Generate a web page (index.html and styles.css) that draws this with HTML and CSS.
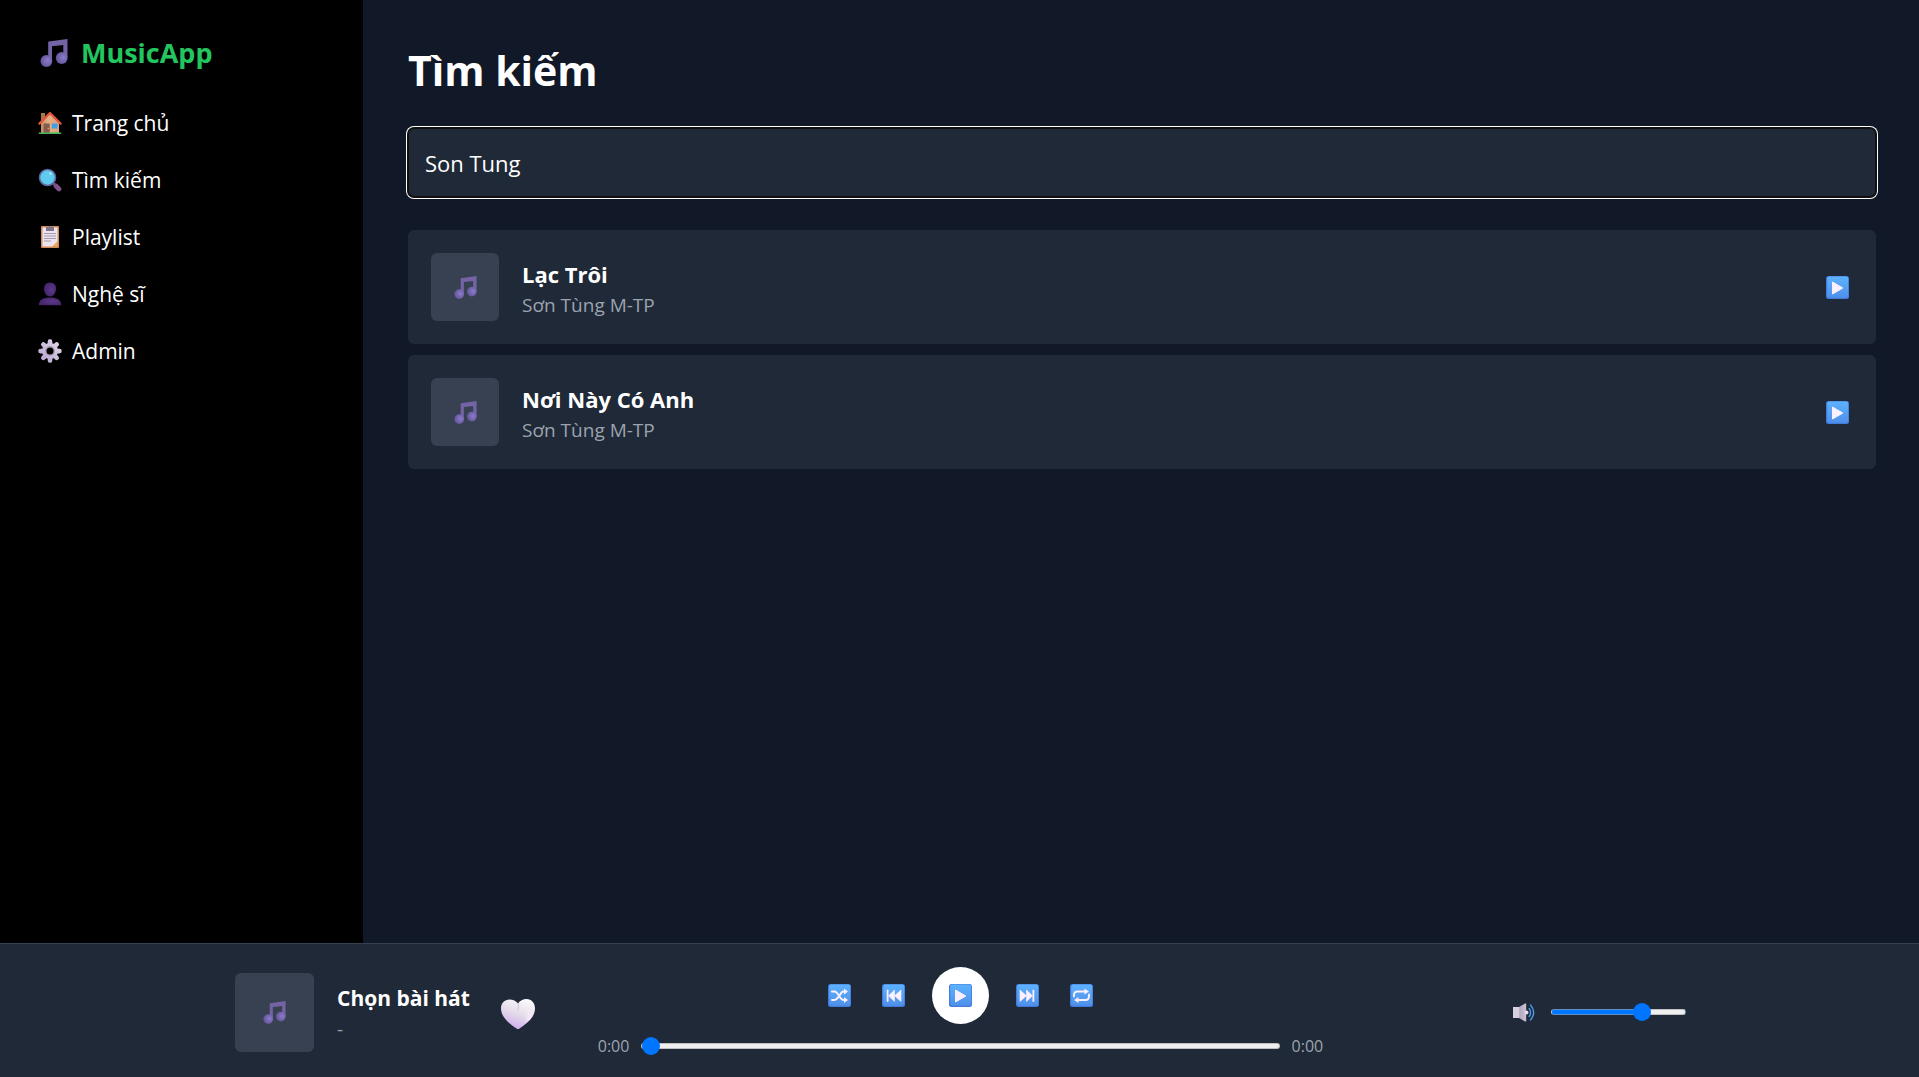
FILE: index.html
```html
<!DOCTYPE html>
<html lang="vi">
<head>
<meta charset="utf-8">
<meta name="viewport" content="width=device-width, initial-scale=1">
<title>MusicApp - Tìm kiếm</title>
<link rel="stylesheet" href="styles.css">
</head>
<body>
<svg class="sprite" aria-hidden="true">
  <defs>
    <radialGradient id="g-note" cx=".62" cy=".45" r=".6"><stop offset="0" stop-color="#8b7ccb"/><stop offset="1" stop-color="#65559a"/></radialGradient>
    <linearGradient id="g-key" x1="0" y1="0" x2="0" y2="1"><stop offset="0" stop-color="#5db2fd"/><stop offset="1" stop-color="#4f90ea"/></linearGradient>
    <linearGradient id="g-wall" x1="0" y1="0" x2="1" y2="0"><stop offset="0" stop-color="#c08b5c"/><stop offset=".4" stop-color="#e8ae82"/><stop offset="1" stop-color="#dba27d"/></linearGradient>
    <linearGradient id="g-gear" x1="1" y1="0" x2="0" y2="1"><stop offset="0" stop-color="#ded6e6"/><stop offset="1" stop-color="#b8a6d2"/></linearGradient>
    <linearGradient id="g-heart" x1=".7" y1="0" x2=".3" y2="1"><stop offset="0" stop-color="#fafafa"/><stop offset=".5" stop-color="#e4dbe9"/><stop offset="1" stop-color="#cfa9f0"/></linearGradient>
    <radialGradient id="g-heart-glow" cx=".68" cy=".62" r=".35"><stop offset="0" stop-color="#f6e9fc"/><stop offset="1" stop-color="#f6e9fc" stop-opacity="0"/></radialGradient>
    <linearGradient id="g-horn" x1="0" y1="0" x2="1" y2="0"><stop offset="0" stop-color="#d8cfdf"/><stop offset=".45" stop-color="#d8cfdf"/><stop offset=".5" stop-color="#b4aabf"/><stop offset="1" stop-color="#cbc1d6"/></linearGradient>
    <radialGradient id="g-person" cx=".6" cy=".5" r=".6"><stop offset="0" stop-color="#5b3a8c"/><stop offset="1" stop-color="#432368"/></radialGradient>
  </defs>
  <symbol id="i-note" viewBox="0 0 28 28">
    <path fill="#7464a6" d="M8.600 2.600 27.500 0v18.500h-4.200V6L12 7.200V22H8.200V3z"/>
    <circle cx="6.400" cy="22" r="5.900" fill="url(#g-note)"/>
    <circle cx="21.700" cy="19" r="5.900" fill="url(#g-note)"/>
  </symbol>
  <symbol id="i-home" viewBox="0 0 24 24">
    <path fill="#a8763f" d="M3 2h4v9H3z"/>
    <path fill="url(#g-wall)" d="M3 11.500 12 3l9 8.500V22H3z"/>
    <path fill="none" stroke="#e2553f" stroke-width="2.200" stroke-linecap="round" stroke-linejoin="round" d="M1.400 12.600 12 2l10.600 10.600"/>
    <path fill="#855a50" d="M5.500 12.500h6.200V22H5.500z"/><circle cx="10.300" cy="17.500" r=".8" fill="#d9a07c"/>
    <path fill="#3f9fe8" d="M13.800 12.500h5.700v5h-5.700z"/>
    <path fill="#41b957" d="M.8 21.500h22.400v1.500H.8z"/>
  </symbol>
  <symbol id="i-search" viewBox="0 0 24 24">
    <path stroke="#82528e" stroke-width="4.600" stroke-linecap="round" d="m18 18 3 3"/>
    <path stroke="#6d5181" stroke-width="3" d="m14.500 14.500 3 3"/>
    <circle cx="9.500" cy="9.500" r="8" fill="#5fcbf0" stroke="#61679c" stroke-width="1.600"/>
    <circle cx="12.500" cy="5.500" r="1.200" fill="#b7ebfb"/>
  </symbol>
  <symbol id="i-list" viewBox="0 0 24 24">
    <rect x="3" y="1" width="18" height="22" rx="1" fill="#d38a55"/>
    <path fill="#ece4f0" d="M4.500 2.500h15v14l-5 5h-10z"/>
    <path fill="#f3a860" d="m14.500 21.500 5-5v5z"/>
    <path fill="#81758a" d="M8 2h2.500a1.600 1.600 0 0 1 3 0H16v4H8z"/>
    <path stroke="#a49aac" stroke-width="1" d="M6 8.500h12M6 11h12M6 13.500h12M6 16h7"/>
  </symbol>
  <symbol id="i-user" viewBox="0 0 24 24">
    <path fill="url(#g-person)" d="M12 .8c4 0 6 2 6 5.500 0 5-2.500 8.200-6 8.200S6 11.300 6 6.300C6 2.800 8 .8 12 .8z"/>
    <path fill="url(#g-person)" d="M.8 23.300C1 17.500 5 15.500 12 15.500s11 2 11.200 7.800z"/>
  </symbol>
  <symbol id="i-gear" viewBox="0 0 24 24">
    <g stroke="url(#g-gear)" stroke-width="4.600" stroke-linecap="round"><path d="M12 2.600v18.900M2.600 12.100h18.800M5.300 5.400l13.400 13.400M18.700 5.400 5.300 18.800"/></g>
    <path fill="url(#g-gear)" d="M10 .8h4v4h-4zM10 19.200h4v4h-4zM.8 10h4v4h-4zM19.200 10h4v4h-4z" opacity=".6"/>
    <circle cx="12" cy="12" r="8" fill="url(#g-gear)"/>
    <circle cx="12" cy="12" r="5" fill="#aaa0b4"/>
    <circle cx="12" cy="12" r="3.500" fill="#000"/>
  </symbol>
  <symbol id="i-heart" viewBox="0 0 34 30">
    <path fill="url(#g-heart)" d="M17 4.500C19 1.500 22 0 25.500 0 30.500 0 34 4 34 9.500 34 18 26 24.500 18.500 29.500q-1.500 1-3 0C8 24.500 0 18 0 9.500 0 4 3.500 .5 8.500 .5 12 .5 15 1.800 17 4.500z"/>
    <path fill="url(#g-heart-glow)" d="M17 4.500C19 1.500 22 0 25.500 0 30.500 0 34 4 34 9.500 34 18 26 24.500 18.500 29.500z"/>
    <path fill="none" stroke="#cfc7d4" stroke-width="1.200" stroke-linecap="round" d="M17 4.800q1.200 3 0 6"/>
  </symbol>
  <symbol id="i-key" viewBox="0 0 23 23">
    <rect width="23" height="23" rx="2.500" fill="#417bdc"/>
    <rect x="1.200" y=".4" width="21" height="21.400" rx="2" fill="url(#g-key)"/>
  </symbol>
  <symbol id="i-play" viewBox="0 0 23 23">
    <use href="#i-key"/><path fill="#fbf0fe" stroke="#fbf0fe" stroke-linejoin="round" d="M6.500 6v12l10.300-6z"/>
  </symbol>
  <symbol id="i-prev" viewBox="0 0 23 23">
    <use href="#i-key"/><path fill="#fbf0fe" stroke="#fbf0fe" stroke-width=".6" stroke-linejoin="round" d="M5 6h1.200v11.500H5zM12.500 6v11.500l-6-5.700zM19 6v11.500l-6.500-5.700z"/>
  </symbol>
  <symbol id="i-next" viewBox="0 0 23 23">
    <use href="#i-key"/><path fill="#fbf0fe" stroke="#fbf0fe" stroke-width=".6" stroke-linejoin="round" d="M18 6h-1.200v11.500H18zM10.500 6v11.500l6-5.700zM4 6v11.500l6.500-5.700z"/>
  </symbol>
  <symbol id="i-shuffle" viewBox="0 0 23 23">
    <use href="#i-key"/>
    <path fill="none" stroke="#fbf0fe" stroke-width="2" stroke-linecap="round" d="M4 7.500h2.500c4 0 5 8.500 9 8.500h1.500M4 16h2.500c1.500 0 2.500-1 3.200-2.500M12.300 10.500c.8-1.800 1.700-3 3.200-3H17"/>
    <path fill="#fbf0fe" d="m16 4.500 4 3-4 3zM16 13l4 3-4 3z"/>
  </symbol>
  <symbol id="i-repeat" viewBox="0 0 23 23">
    <use href="#i-key"/>
    <path fill="none" stroke="#fbf0fe" stroke-width="1.900" stroke-linecap="round" d="M4 12.500V11q0-3.500 3.500-3.500H15M19 10.500V12q0 4-3.500 4H8"/>
    <path fill="#fbf0fe" d="m14.500 4.500 4.500 3-4.500 3zM8.500 13 4 16l4.500 3z"/>
  </symbol>
  <symbol id="i-volume" viewBox="0 0 23 23">
    <path fill="url(#g-horn)" d="M0 6h6l6-3.500h1.200v18H12L6 17H0z"/>
    <circle cx="13.500" cy="11.500" r="2" fill="#e6dcec"/>
    <path fill="none" stroke="#4a9be8" stroke-width="1.400" stroke-linecap="round" d="M16.200 7.500q2.800 4 0 8M17.500 4q6.400 7.500 0 15"/>
  </symbol>
</svg>

<div class="app">
  <aside class="sidebar">
    <div class="logo"><svg class="logo-icon" aria-hidden="true"><use href="#i-note"/></svg>MusicApp</div>
    <nav class="nav">
      <a href="#home"><svg class="nav-icon" aria-hidden="true"><use href="#i-home"/></svg>Trang chủ</a>
      <a href="#search"><svg class="nav-icon" aria-hidden="true"><use href="#i-search"/></svg>Tìm kiếm</a>
      <a href="#playlist"><svg class="nav-icon" aria-hidden="true"><use href="#i-list"/></svg>Playlist</a>
      <a href="#artists"><svg class="nav-icon" aria-hidden="true"><use href="#i-user"/></svg>Nghệ sĩ</a>
      <a href="#admin"><svg class="nav-icon" aria-hidden="true"><use href="#i-gear"/></svg>Admin</a>
    </nav>
  </aside>

  <main class="main">
    <h1>Tìm kiếm</h1>
    <input class="search" type="text" value="Son Tung" aria-label="Tìm kiếm">
    <ul class="songs">
      <li class="song">
        <div class="cover"><svg class="icon" aria-hidden="true"><use href="#i-note"/></svg></div>
        <div class="info"><div class="title">Lạc Trôi</div><div class="artist">Sơn Tùng M-TP</div></div>
        <button class="icon-btn" type="button" aria-label="Phát Lạc Trôi"><svg class="icon"><use href="#i-play"/></svg></button>
      </li>
      <li class="song">
        <div class="cover"><svg class="icon" aria-hidden="true"><use href="#i-note"/></svg></div>
        <div class="info"><div class="title">Nơi Này Có Anh</div><div class="artist">Sơn Tùng M-TP</div></div>
        <button class="icon-btn" type="button" aria-label="Phát Nơi Này Có Anh"><svg class="icon"><use href="#i-play"/></svg></button>
      </li>
    </ul>
  </main>

  <footer class="player">
    <div class="player-inner">
      <div class="now">
        <div class="cover cover-lg"><svg class="icon" aria-hidden="true"><use href="#i-note"/></svg></div>
        <div><div class="title">Chọn bài hát</div><div class="artist">-</div></div>
        <button class="like" type="button" aria-label="Yêu thích"><svg class="heart"><use href="#i-heart"/></svg></button>
      </div>
      <div class="center">
        <div class="controls">
          <button class="icon-btn" type="button" aria-label="Phát ngẫu nhiên"><svg class="icon"><use href="#i-shuffle"/></svg></button>
          <button class="icon-btn" type="button" aria-label="Bài trước"><svg class="icon"><use href="#i-prev"/></svg></button>
          <button class="icon-btn play" type="button" aria-label="Phát"><svg class="icon"><use href="#i-play"/></svg></button>
          <button class="icon-btn" type="button" aria-label="Bài sau"><svg class="icon"><use href="#i-next"/></svg></button>
          <button class="icon-btn" type="button" aria-label="Lặp lại"><svg class="icon"><use href="#i-repeat"/></svg></button>
        </div>
        <div class="progress">
          <span>0:00</span>
          <input class="range" type="range" min="0" max="100" value="0" style="--value:0%" aria-label="Tiến trình">
          <span>0:00</span>
        </div>
      </div>
      <div class="volume">
        <button class="icon-btn" type="button" aria-label="Âm lượng"><svg class="icon"><use href="#i-volume"/></svg></button>
        <input class="range range-volume" type="range" min="0" max="100" value="70" style="--value:70%" aria-label="Mức âm lượng">
      </div>
    </div>
  </footer>
</div>
</body>
</html>
```
FILE: styles.css
```css
*, *::before, *::after { box-sizing: border-box; }

body {
  margin: 0;
  background: #111827;
  color: #fff;
  font-family: "Segoe UI", "Open Sans", "Noto Sans", sans-serif;
  font-size: 21px;
  line-height: 34px;
}

button, input { margin: 0; font: inherit; color: inherit; }
button { border: 0; padding: 0; background: none; cursor: pointer; }
svg { display: block; flex: none; }

.sprite { position: absolute; width: 0; height: 0; }

.app {
  display: grid;
  grid-template-columns: 363px minmax(0, 1fr);
  grid-template-rows: minmax(0, 1fr) auto;
  height: 100vh;
}

.sidebar { background: #000; padding: 34px 38px; }

.logo {
  display: flex;
  align-items: center;
  gap: 13px;
  padding-left: 2px;
  margin-bottom: 34px;
  color: #22c55e;
  font-size: 27px;
  font-weight: 700;
  line-height: 38px;
}
.logo-icon { width: 28px; height: 28px; }

.nav { display: flex; flex-direction: column; gap: 23px; }
.nav a {
  display: flex;
  align-items: center;
  gap: 10px;
  color: #fff;
  text-decoration: none;
}
.nav-icon { width: 24px; height: 24px; }

.main { padding: 45px 43px 45px 45px; overflow: auto; font-size: 22px; }

h1 { margin: 0 0 33px; font-size: 41px; line-height: 50px; font-weight: 700; }

.search {
  display: block;
  width: 100%;
  height: 69px;
  margin-bottom: 33px;
  padding: 0 17px;
  border: 0;
  border-radius: 6px;
  outline: 0;
  background: #1f2937;
  box-shadow: inset 0 0 0 1px #101010, 0 0 0 1px #101010, 0 0 0 2px #fff;
}

.songs {
  display: flex;
  flex-direction: column;
  gap: 11px;
  margin: 0;
  padding: 0;
  list-style: none;
}
.song {
  display: flex;
  align-items: center;
  gap: 23px;
  padding: 23px;
  border-radius: 6px;
  background: #1f2937;
}
.info { flex: 1; min-width: 0; padding-top: 2px; }
.title { font-weight: 700; }
.artist { color: #9ca3af; font-size: 19px; line-height: 28px; }

.cover {
  display: grid;
  place-items: center;
  flex: none;
  width: 68px;
  height: 68px;
  border-radius: 6px;
  background: #374151;
}
.cover-lg { width: 79px; height: 79px; }

.icon { width: 23px; height: 23px; }
.icon-btn { display: grid; place-items: center; flex: none; width: 31px; height: 34px; }

.player {
  grid-column: 1 / -1;
  padding: 23px 22px 20px 24px;
  border-top: 1px solid #374151;
  background: #1f2937;
}
.player-inner {
  display: grid;
  grid-template-columns: 1fr 2fr 1fr;
  align-items: center;
  max-width: 1451px;
  margin: 0 auto;
}
.now { display: flex; align-items: center; gap: 23px; white-space: nowrap; }
.like { display: grid; place-items: center; width: 50px; height: 50px; padding-top: 4px; }
.heart { width: 34px; height: 30px; }

.center { display: flex; flex-direction: column; gap: 11px; }
.controls { display: flex; align-items: center; justify-content: center; gap: 23px; }
.play { width: 57px; height: 57px; border-radius: 50%; background: #fff; }
.progress {
  display: flex;
  align-items: center;
  gap: 12px;
  color: #9ca3af;
  font-size: 16px;
  line-height: 22px;
}

.volume { display: flex; align-items: center; justify-content: flex-end; gap: 11px; }

.range {
  flex: 1;
  min-width: 0;
  height: 18px;
  appearance: none;
  background: none;
}
.range-volume { flex: none; width: 135px; }
.range::-webkit-slider-runnable-track {
  height: 6px;
  border: 1px solid rgb(160 160 160 / 60%);
  border-radius: 3px;
  background: linear-gradient(to right, #0075ff var(--value), #efefef var(--value));
}
.range::-webkit-slider-thumb {
  appearance: none;
  width: 18px;
  height: 18px;
  margin-top: -7px;
  border-radius: 50%;
  background: #0075ff;
}
```
